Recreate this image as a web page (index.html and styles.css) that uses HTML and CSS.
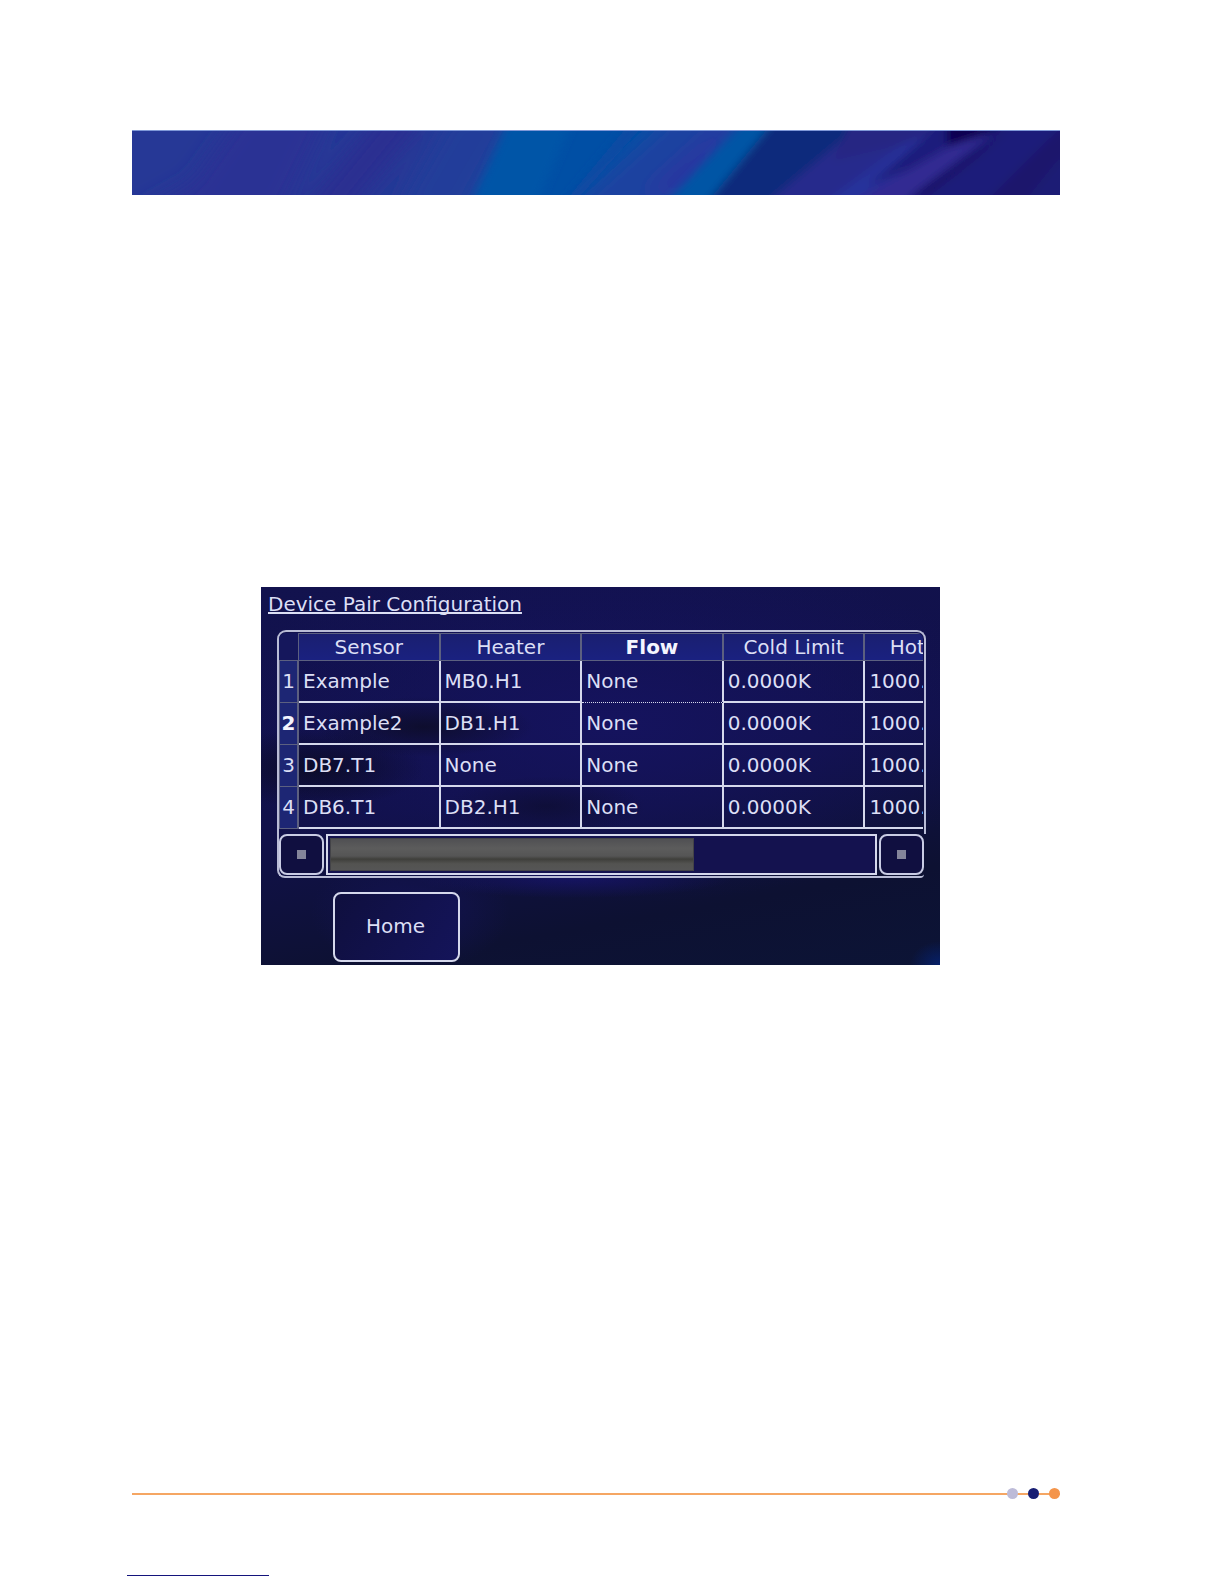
FILE: index.html
```html
<!DOCTYPE html>
<html lang="en">
<head>
<meta charset="utf-8">
<title>Device Pair Configuration</title>
<link rel="stylesheet" href="styles.css">
</head>
<body>
<div class="page">
  <header class="banner">
    <svg class="banner-art" viewBox="0 0 928 64" preserveAspectRatio="none" aria-hidden="true">
      <defs>
        <filter id="soft" x="-20%" y="-50%" width="140%" height="200%"><feGaussianBlur stdDeviation="10"/></filter>
        <filter id="crisp" x="-20%" y="-50%" width="140%" height="200%"><feGaussianBlur stdDeviation="4"/></filter>
      </defs>
      <rect width="928" height="64" fill="#263896"/>
      <g filter="url(#soft)">
        <path d="M110-20H200L150 84H0L60 50Z" fill="#2b3194"/>
        <path d="M250-20H300L215 84H165Z" fill="#2a2f91"/>
        <path d="M320-20H385L330 84H260Z" fill="#203c9a"/>
        <path d="M385-20H545L430 84H335Z" fill="#0050a5"/>
        <path d="M545-20H640L550 84H430Z" fill="#1d42a0"/>
        <path d="M580 0H600L550 64H510Z" fill="#2a36a0"/>
      </g>
      <g filter="url(#crisp)">
        <path d="M382-20L335 84H400L445-20Z" fill="#0054a7"/>
        <path d="M500-10L430 74H440L515-10Z" fill="#104aa2"/>
        <path d="M622-20H655L565 84H522Z" fill="#0055a5"/>
        <path d="M650-20H980V84H565Z" fill="#102c7c"/>
        <path d="M745-20H980V84H620L680 34Z" fill="#282b8c"/>
        <path d="M780 8L690 74H770L850-10Z" fill="#28339b"/>
        <path d="M720-10H830L775 12L700 30Z" fill="#252783"/>
        <path d="M812-10H890L800 30L735 55Z" fill="#1f1d7c"/>
        <path d="M815-12H880L855 4L815 16Z" fill="#070050"/>
        <path d="M865 0L820 14L715 74H775Z" fill="#312b92"/>
        <path d="M876-10H980V84H755Z" fill="#1c1f7a"/>
        <path d="M882-6L778 66L795 64L840 30Z" fill="#130e62"/>
        <path d="M925 0L850 74H980V0Z" fill="#1c176c"/>
        <path d="M925 30L890 74H980V10Z" fill="#1d1e74"/>
      </g>
    </svg>
  </header>

  <main class="panel">
    <h1 class="panel-title">Device Pair Configuration</h1>
    <div class="grid-view">
      <div class="grid-frame">
        <div class="grid-clip">
          <table class="grid">
            <colgroup>
              <col class="col-index"><col class="col-data"><col class="col-data"><col class="col-data"><col class="col-data"><col class="col-data">
            </colgroup>
            <thead>
              <tr><td class="corner"></td><th scope="col">Sensor</th><th scope="col">Heater</th><th scope="col" class="current">Flow</th><th scope="col">Cold Limit</th><th scope="col">Hot Limit</th></tr>
            </thead>
            <tbody>
              <tr><th scope="row">1</th><td>Example</td><td>MB0.H1</td><td class="above-focus">None</td><td>0.0000K</td><td>1000.0000K</td></tr>
              <tr><th scope="row" class="current">2</th><td>Example2</td><td>DB1.H1</td><td>None</td><td>0.0000K</td><td>1000.0000K</td></tr>
              <tr><th scope="row">3</th><td>DB7.T1</td><td>None</td><td>None</td><td>0.0000K</td><td>1000.0000K</td></tr>
              <tr><th scope="row">4</th><td>DB6.T1</td><td>DB2.H1</td><td>None</td><td>0.0000K</td><td>1000.0000K</td></tr>
            </tbody>
          </table>
        </div>
      </div>
      <div class="scroll-row">
        <button class="scroll-button" type="button" aria-label="Scroll left"></button>
        <div class="scroll-track"><div class="scroll-handle"></div></div>
        <button class="scroll-button" type="button" aria-label="Scroll right"></button>
      </div>
    </div>
    <button class="home" type="button">Home</button>
  </main>

  <footer class="footer">
    <div class="rule">
      <span class="dot dot-lilac"></span><span class="dot dot-navy"></span><span class="dot dot-orange"></span>
    </div>
    <div class="underline"></div>
  </footer>
</div>
</body>
</html>
```
FILE: styles.css
```css
* { box-sizing: border-box; }

body {
  margin: 0;
  background: #fff;
  font-family: "DejaVu Sans", sans-serif;
  font-size: 20px;
  line-height: 24px;
  color: #dcdff5;
}

.page {
  display: flex;
  flex-direction: column;
  min-height: 100vh;
  padding: 130px 164px 8px 132px;
}

.banner {
  height: 65px;
  overflow: hidden;
  border-top: 1px solid #7f98d8;
  background: #263896;
}

.banner-art { display: block; width: 100%; height: 100%; }

.panel {
  display: flow-root;
  margin: 392px 120px 0 129px;
  padding: 5px 14px 3px 16px;
  background:
    radial-gradient(ellipse 30px 24px at 100% 100%, #06206a, transparent),
    radial-gradient(ellipse 110px 30px at 24% 37%, #0c0c24cc, transparent),
    radial-gradient(ellipse 110px 40px at 8% 48%, #0a0a20cc, transparent),
    radial-gradient(ellipse 100px 30px at 42% 58%, #0c0c2899, transparent),
    radial-gradient(ellipse 160px 20px at 46% 77%, #17146acc, transparent),
    radial-gradient(ellipse 100px 60px at 22% 86%, #131352, transparent),
    radial-gradient(ellipse 400px 180px at 52% 36%, #15135e, transparent),
    linear-gradient(170deg, #12124e 0%, #11114a 50%, #0d1132 80%, #0c1436 100%);
}

.panel-title {
  margin: 0 0 14px -9px;
  font-size: 20px;
  font-weight: 400;
  line-height: 24px;
  text-decoration: underline;
  text-decoration-thickness: 2px;
  text-underline-offset: 1px;
  text-decoration-skip-ink: none;
}

.grid-frame {
  padding: 1px 1px 5px 0;
  border: 2px solid #b9bcd6;
  border-bottom: 0;
  border-radius: 9px 9px 0 0;
}

.grid-clip { overflow: hidden; border-radius: 6px 6px 0 0; }

.grid {
  width: 728px;
  table-layout: fixed;
  border-collapse: separate;
  border-spacing: 0;
}

.col-index { width: 20px; }

.grid th, .grid td { padding: 0; white-space: nowrap; }

.grid thead th {
  height: 28px;
  border: 1px solid #5c6080;
  border-width: 1px 2px 1px 0;
  background: linear-gradient(#1a1f70, #1a2180);
  font-weight: 400;
}

.grid .corner {
  border: 1px solid #5c6080;
  border-width: 0 1px 1px 0;
  background: #15175c;
}

.grid tbody th {
  height: 42px;
  padding-bottom: 1px;
  border: 1px solid #5c6080;
  border-width: 0 2px 1px 1px;
  background: #1d2674;
  font-weight: 400;
}

.grid .current { font-weight: 700; color: #f4f5ff; }

.grid tbody td {
  padding-left: 4px;
  border: solid #d5d8ec;
  border-width: 0 2px 2px 0;
}

.grid tbody .above-focus { padding-bottom: 1px; border-bottom-width: 1px; border-bottom-style: dotted; }

.scroll-row {
  display: flex;
  gap: 2px;
  margin-right: 2px;
  padding-bottom: 1px;
  border: 2px solid #b9bcd6;
  border-width: 0 0 2px 2px;
  border-radius: 0 0 4px 8px;
}

.scroll-button {
  display: grid;
  place-items: center;
  width: 45px;
  height: 41px;
  padding: 0;
  border: 2px solid #c9cce4;
  border-radius: 8px;
  background: #100f40;
}

.scroll-button::before { content: ""; width: 9px; height: 9px; background: #84859a; }

.scroll-track {
  flex: 1;
  padding: 2px;
  border: 2px solid #d5d8ec;
  background: #14124f;
}

.scroll-handle {
  width: 67%;
  height: 100%;
  border: 1px solid #434347;
  background: linear-gradient(#505053, #5c5c5c 30%, #555 55%, #3f3f3b 65%, #535351 80%, #555);
}

.home {
  display: block;
  width: 127px;
  height: 70px;
  margin: 14px 0 0 56px;
  padding: 0 2px 2px 0;
  border: 2px solid #d5d8ec;
  border-radius: 8px;
  background: linear-gradient(120deg, #0f0f3e, #14145a);
  font: inherit;
  color: inherit;
}

.footer { margin-top: auto; }

.rule {
  display: flex;
  justify-content: flex-end;
  gap: 10px;
  background: linear-gradient(#f5a663, #f5a663) center / 100% 2px no-repeat;
}

.dot { width: 11px; height: 11px; border-radius: 50%; }
.dot-lilac { background: #bdbbd8; }
.dot-navy { background: #171d72; }
.dot-orange { background: #f4944a; }

.underline {
  width: 142px;
  height: 1px;
  margin: 76px 0 0 -5px;
  background: #14147c;
}
```
